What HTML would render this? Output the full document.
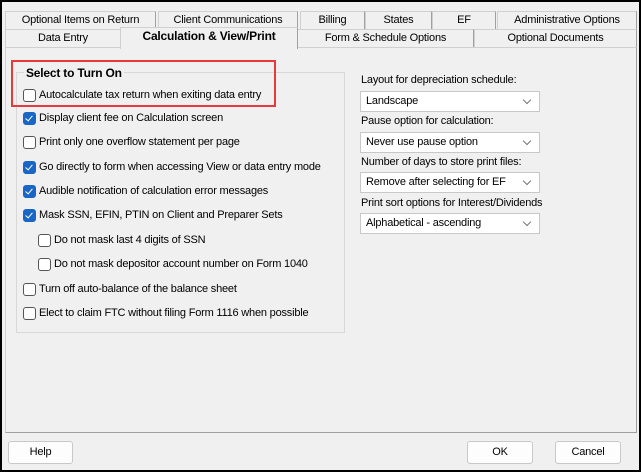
<!DOCTYPE html>
<html><head><style>
*{box-sizing:border-box;margin:0;padding:0}
body{width:641px;height:472px;background:#000;position:relative;overflow:hidden;font-family:"Liberation Sans",Arial,sans-serif;font-size:11px;letter-spacing:-0.2px;color:#000}
.win{position:absolute;left:2px;top:2px;width:637px;height:468px;background:#f0f0f0}
.a{position:absolute;white-space:nowrap}
.tab{position:absolute;height:18px;border:1px solid #d0d0d0;border-bottom:none;background:#f0f0f0;text-align:center;line-height:17px;border-right:1px solid #a0a0a0}
.panel{position:absolute;left:3px;top:45px;width:632px;height:386px;border:1px solid #d0d0d0;border-right:1px solid #a0a0a0;border-bottom:1px solid #a0a0a0;background:#f0f0f0}
.cb{position:absolute;width:13px;height:13px;border:1px solid #555;border-radius:3px;background:#fff}
.cb.on{background:#1a66c4;border-color:#1a66c4}
.cb.on:after{content:"";position:absolute;left:3px;top:1px;width:3px;height:6px;border:solid #fff;border-width:0 1.5px 1.5px 0;transform:rotate(40deg)}
.combo{position:absolute;left:358px;width:180px;height:21px;background:#fff;border:1px solid #c8c8c8;padding-left:5px;line-height:19px}
.combo:after{content:"";position:absolute;right:9px;top:5px;width:5px;height:5px;border:solid #777;border-width:0 1px 1px 0;transform:rotate(45deg)}
.btn{position:absolute;top:439px;height:23px;background:#fdfdfd;border:1px solid #c8c8c8;border-radius:3px;text-align:center;line-height:21px}
</style></head><body><div class="win">
<div class="tab" style="left:3px;top:9px;width:151px">Optional Items on Return</div>
<div class="tab" style="left:156px;top:9px;width:140px">Client Communications</div>
<div class="tab" style="left:298px;top:9px;width:65px">Billing</div>
<div class="tab" style="left:363px;top:9px;width:67px">States</div>
<div class="tab" style="left:430px;top:9px;width:64px">EF</div>
<div class="tab" style="left:495px;top:9px;width:140px">Administrative Options</div>
<div class="tab" style="left:3px;top:27px;width:116px">Data Entry</div>
<div class="tab" style="left:295px;top:27px;width:177px">Form &amp; Schedule Options</div>
<div class="tab" style="left:472px;top:27px;width:163px">Optional Documents</div>
<div class="panel"></div>
<div class="tab" style="left:118px;top:25px;width:178px;height:22px;font-weight:bold;font-size:12px;border-color:#d0d0d0 #a0a0a0 #f0f0f0 #d0d0d0;z-index:2">Calculation &amp; View/Print</div>
<div class="a" style="left:14px;top:70px;width:329px;height:261px;border:1px solid #d8d8d8"></div>
<div class="a" style="left:9px;top:58px;width:265px;height:47px;border:2px solid #e8393c"></div>
<div class="a" style="left:22px;top:64px;font-weight:bold;font-size:12px;background:#f0f0f0;padding:0 2px">Select to Turn On</div>
<div class="cb" style="left:21px;top:87px"></div><div class="a" style="left:37px;top:87px">Autocalculate tax return when exiting data entry</div>
<div class="cb on" style="left:21px;top:110px"></div><div class="a" style="left:37px;top:110px">Display client fee on Calculation screen</div>
<div class="cb" style="left:21px;top:134px"></div><div class="a" style="left:37px;top:134px">Print only one overflow statement per page</div>
<div class="cb on" style="left:21px;top:159px"></div><div class="a" style="left:37px;top:159px">Go directly to form when accessing View or data entry mode</div>
<div class="cb on" style="left:21px;top:183px"></div><div class="a" style="left:37px;top:183px">Audible notification of calculation error messages</div>
<div class="cb on" style="left:21px;top:207px"></div><div class="a" style="left:37px;top:207px">Mask SSN, EFIN, PTIN on Client and Preparer Sets</div>
<div class="cb" style="left:36px;top:232px"></div><div class="a" style="left:52px;top:232px">Do not mask last 4 digits of SSN</div>
<div class="cb" style="left:36px;top:256px"></div><div class="a" style="left:52px;top:256px">Do not mask depositor account number on Form 1040</div>
<div class="cb" style="left:21px;top:281px"></div><div class="a" style="left:37px;top:281px">Turn off auto-balance of the balance sheet</div>
<div class="cb" style="left:21px;top:305px"></div><div class="a" style="left:37px;top:305px">Elect to claim FTC without filing Form 1116 when possible</div>
<div class="a" style="left:359px;top:72px">Layout for depreciation schedule:</div>
<div class="combo" style="top:89px">Landscape</div>
<div class="a" style="left:359px;top:113px">Pause option for calculation:</div>
<div class="combo" style="top:130px">Never use pause option</div>
<div class="a" style="left:359px;top:154px">Number of days to store print files:</div>
<div class="combo" style="top:170px">Remove after selecting for EF</div>
<div class="a" style="left:359px;top:195px">Print sort options for Interest/Dividends</div>
<div class="combo" style="top:211px">Alphabetical - ascending</div>
<div class="btn" style="left:6px;width:65px">Help</div>
<div class="btn" style="left:465px;width:66px">OK</div>
<div class="btn" style="left:553px;width:66px">Cancel</div>
</div></body></html>
